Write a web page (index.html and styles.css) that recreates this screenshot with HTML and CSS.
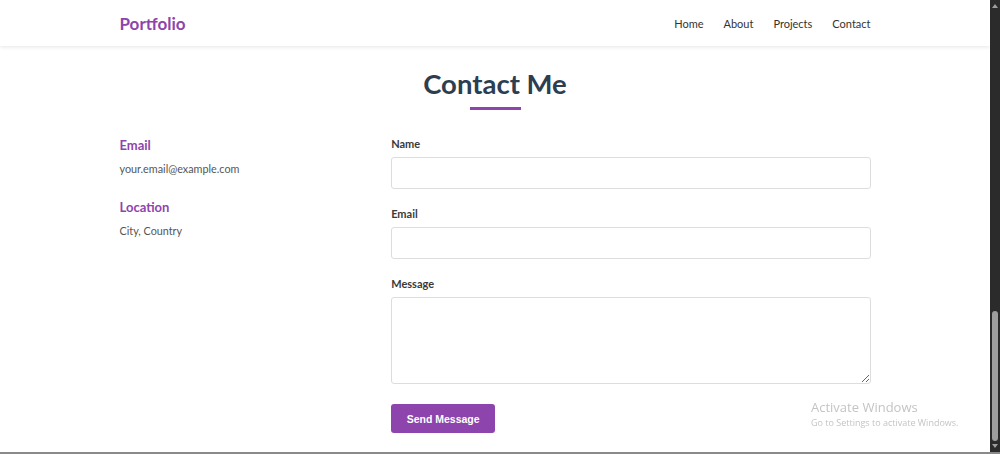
FILE: index.html
```html
<!DOCTYPE html>
<html>
<head>
<meta charset="utf-8">
<link rel="stylesheet" href="styles.css">
</head>
<body>
<header class="site-header">
  <div class="container header-inner">
    <div class="logo">Portfolio</div>
    <nav class="nav">
      <a href="#">Home</a>
      <a href="#">About</a>
      <a href="#">Projects</a>
      <a href="#">Contact</a>
    </nav>
  </div>
</header>
<main class="page">
  <section class="contact container">
    <h2 class="title">Contact Me</h2>
    <div class="grid">
      <div class="info">
        <div class="info-item">
          <h3>Email</h3>
          <p>your.email@example.com</p>
        </div>
        <div class="info-item">
          <h3>Location</h3>
          <p>City, Country</p>
        </div>
      </div>
      <form class="form">
        <div class="field">
          <label>Name</label>
          <input type="text">
        </div>
        <div class="field">
          <label>Email</label>
          <input type="email">
        </div>
        <div class="field">
          <label>Message</label>
          <textarea></textarea>
        </div>
        <button type="button" class="btn">Send Message</button>
      </form>
    </div>
  </section>
</main>
<div class="watermark">
  <div class="wm1">Activate Windows</div>
  <div class="wm2">Go to Settings to activate Windows.</div>
</div>
<div class="scrollbar">
  <div class="arrow up"></div>
  <div class="thumb"></div>
  <div class="arrow down"></div>
</div>
<div class="bottom-line"></div>
</body>
</html>
```
FILE: styles.css
```css
* { box-sizing: border-box; }
html, body { margin: 0; padding: 0; }
body {
  font-family: "Lato", "Open Sans", sans-serif;
  color: #333;
  background: #fff;
  width: 990px;
  height: 454px;
  overflow: hidden;
}
.container {
  width: 751px;
  margin: 0 auto;
}
.site-header {
  height: 46px;
  background: #fff;
  box-shadow: 0 1px 4px rgba(0,0,0,0.1);
  position: relative;
  z-index: 2;
}
.header-inner {
  height: 46px;
  display: flex;
  align-items: center;
  justify-content: space-between;
}
.logo {
  font-size: 17px;
  font-weight: 700;
  color: #8e44ad;
}
.nav {
  display: flex;
  gap: 20px;
}
.nav a {
  font-size: 11px;
  color: #333;
  text-decoration: none;
}
.page { padding-top: 20px; }
.title {
  margin: 0;
  text-align: center;
  font-size: 27.5px;
  font-weight: 700;
  color: #2c3e50;
  line-height: 36px;
}
.title::after {
  content: "";
  display: block;
  width: 51px;
  height: 3px;
  background: #8e44ad;
  margin: 5px auto 0;
}
.grid {
  display: grid;
  grid-template-columns: 1fr 2fr;
  gap: 32px;
  margin-top: 25px;
}
.info-item { margin-bottom: 21px; }
.info-item h3 {
  margin: 1px 0 7px;
  font-size: 13px;
  font-weight: 700;
  color: #8e44ad;
  line-height: 18px;
}
.info-item p {
  margin: 0;
  font-size: 10.8px;
  color: #555;
  line-height: 16px;
}
.form { display: flex; flex-direction: column; padding-top: 1px; }
.field { margin-bottom: 17px; display: flex; flex-direction: column; }
.field label {
  font-size: 11px;
  font-weight: 700;
  color: #3a3a3a;
  line-height: 16px;
  margin-top: 0;
  margin-bottom: 5px;
}
.field input, .field textarea {
  width: 100%;
  height: 32px;
  border: 1px solid #ddd;
  border-radius: 3px;
  font-family: inherit;
  background: #fff;
  margin: 0;
  padding: 6px;
}
.field textarea { height: 87px; display: block; }
.btn {
  align-self: flex-start;
  width: 104px;
  height: 29px;
  border: none;
  border-radius: 3px;
  background: #8e44ad;
  color: #fff;
  font-family: "Liberation Sans", Arial, sans-serif;
  font-weight: 700;
  font-size: 10.5px;
  margin-top: 3px;
}
.watermark {
  position: fixed;
  left: 811px;
  top: 398px;
  color: #c4c4c4;
  z-index: 5;
  font-family: "Open Sans", sans-serif;
}
.wm1 { font-size: 13px; line-height: 18px; }
.wm2 { font-size: 9px; line-height: 14px; }
.scrollbar {
  position: fixed;
  top: 0;
  right: 0;
  width: 10px;
  height: 452px;
  background: #2b2b2b;
  z-index: 6;
}
.thumb {
  position: absolute;
  left: 2px;
  width: 6px;
  top: 311px;
  height: 130px;
  background: #9e9e9e;
  border-radius: 3px;
}
.arrow {
  position: absolute;
  left: 2px;
  width: 0;
  height: 0;
  border-left: 3px solid transparent;
  border-right: 3px solid transparent;
}
.arrow.up { top: 4px; border-bottom: 4px solid #9e9e9e; }
.arrow.down { bottom: 4px; border-top: 4px solid #9e9e9e; }
.bottom-line {
  position: fixed;
  left: 0;
  bottom: 0;
  width: 1000px;
  height: 2px;
  background: #8a8a8a;
  z-index: 7;
}
```
